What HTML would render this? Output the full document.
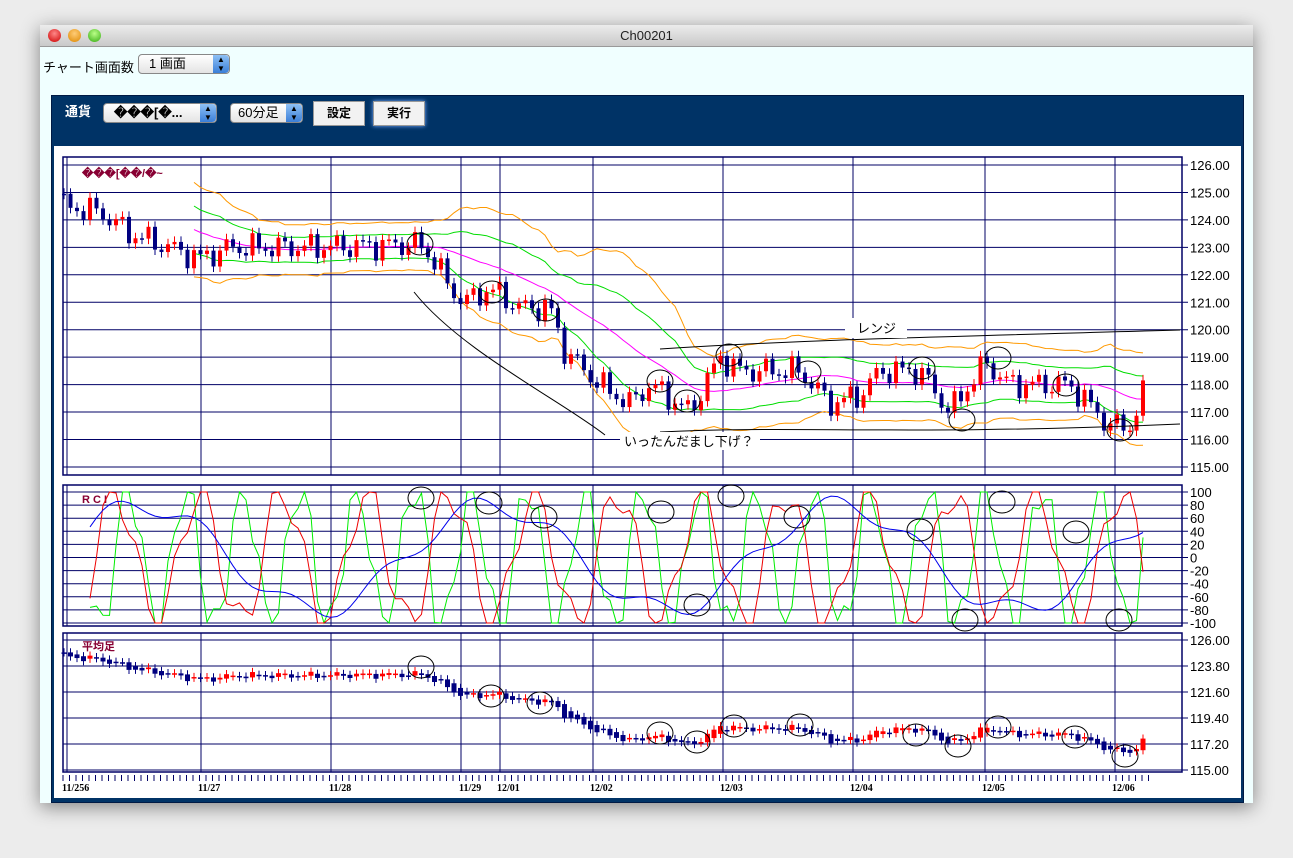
<!DOCTYPE html>
<html><head><meta charset="utf-8"><style>
body{margin:0;width:1293px;height:858px;background:#ececec;position:relative;overflow:hidden;font-family:"Liberation Sans","Noto Sans CJK JP",sans-serif}
.win{position:absolute;left:40px;top:25px;width:1213px;height:778px;background:#f0ffff;box-shadow:0 4px 18px rgba(0,0,0,.45)}
.tb{height:21px;background:linear-gradient(#ececec,#c9c9c9);border-bottom:1px solid #999;text-align:center;font-size:13px;line-height:21px;color:#222}
.dot{position:absolute;top:4px;width:13px;height:13px;border-radius:50%}
.sel{position:absolute;background:linear-gradient(#fff,#e4e4e4);border:1px solid #888;border-radius:4px;font-size:13px;line-height:18px;height:18px}
.sel .ar{position:absolute;right:0;top:0;width:16px;height:18px;background:linear-gradient(#8ec0f5,#3b7fd8);border-radius:0 4px 4px 0;color:#000;font-size:8px;line-height:9px;text-align:center}
.btn{position:absolute;background:#f2f2f2;border:1px solid #999;font-size:12px;font-weight:bold;text-align:center;line-height:23px;height:23px}
</style></head><body>
<div class="win">
<div class="tb">Ch00201</div>
<div class="dot" style="left:8px;background:radial-gradient(circle at 50% 35%,#f88,#c00)"></div>
<div class="dot" style="left:28px;background:radial-gradient(circle at 50% 35%,#fc7,#d80)"></div>
<div class="dot" style="left:48px;background:radial-gradient(circle at 50% 35%,#bf8,#3a1)"></div>
<div style="position:absolute;left:3px;top:32px;font-size:13px">チャート画面数</div>
<div class="sel" style="left:98px;top:29px;width:90px"><span style="padding-left:10px">1 画面</span><div class="ar">▲<br>▼</div></div>
<div style="position:absolute;left:11px;top:70px;width:1191px;height:706px;background:#003366;border:1px solid #001a44"></div>
<div style="position:absolute;left:25px;top:76px;color:#fff;font-weight:bold;font-size:13px">通貨</div>
<div class="sel" style="left:63px;top:78px;width:112px"><span style="padding-left:10px;font-weight:bold">���[�...</span><div class="ar">▲<br>▼</div></div>
<div class="sel" style="left:190px;top:78px;width:71px"><span style="padding-left:7px">60分足</span><div class="ar">▲<br>▼</div></div>
<div class="btn" style="left:273px;top:76px;width:50px">設定</div>
<div class="btn" style="left:333px;top:76px;width:50px;box-shadow:0 0 4px #7af">実行</div>
<div style="position:absolute;left:14px;top:121px;width:1187px;height:652px;background:#fff"></div>
</div>
<svg id="c" style="position:absolute;left:0;top:0" width="1293" height="858" font-family="Liberation Sans,Noto Sans CJK JP,sans-serif"></svg>
<script>
var s='',N='#000066';
function L(x1,y1,x2,y2,c,w){s+='<line x1="'+x1+'" y1="'+y1+'" x2="'+x2+'" y2="'+y2+'" stroke="'+(c||N)+'" stroke-width="'+(w||1)+'"/>'}
function T(x,y,t,o){s+='<text x="'+x+'" y="'+y+'" '+(o||'')+'>'+t+'</text>'}
var vx=[63,67,201,331,461,500,593,723,853,985,1115];
var panels=[[157,475],[485,626],[633,772]];
panels.forEach(function(p){s+='<rect x="63" y="'+p[0]+'" width="1119" height="'+(p[1]-p[0])+'" fill="none" stroke="'+N+'" stroke-width="1.5"/>';vx.forEach(function(x){if(x!=500||p[0]>600)L(x,p[0],x,p[1])})});
L(500,157,500,475);L(500,485,500,626);
for(var i=0;i<12;i++){var y=165+i*27.45;L(63,y,1188,y);T(1190,y+5,(126-i).toFixed(2),'font-size="13"')}
var rl=[100,80,60,40,20,0,-20,-40,-60,-80,-100];
rl.forEach(function(v){var y=557.5-v*0.655;L(63,y,1188,y);T(1190,y+5,v,'font-size="13"')});
var bl=[126,123.8,121.6,119.4,117.2,115];
bl.forEach(function(v,i){var y=640+i*26;L(63,y,1188,y);T(1190,y+5,v.toFixed(2),'font-size="13"')});
T(82,177,'���[��/�~','font-size="11" font-weight="bold" fill="#880033"');
T(82,503,'R C I','font-size="11" font-weight="bold" fill="#880033"');
T(82,650,'平均足','font-size="11" font-weight="bold" fill="#880033"');
for(var x=63;x<1150;x+=6.5)L(x,775,x,781);
[['11/256',62],['11/27',198],['11/28',329],['11/29',459],['12/01',497],['12/02',590],['12/03',720],['12/04',850],['12/05',982],['12/06',1112]].forEach(function(d){T(d[1],791,d[0],'font-size="10" font-weight="bold" font-family="Liberation Serif,serif"')});
var K=[[63,124.5],[100,124.3],[130,123.5],[200,122.6],[230,123],[300,123],[420,123.1],[435,122.5],[450,121.5],[465,121],[490,121.5],[520,120.8],[550,120.8],[565,119.2],[600,118],[630,117.3],[650,118],[690,117],[720,119],[740,118.5],[800,118.5],[830,117.3],[860,117.6],[880,118.5],[920,118.5],[950,117],[985,118.8],[1010,118],[1070,118],[1110,116.5],[1130,116.5],[1150,118.2]];
function P(x){for(var i=0;i<K.length-1;i++)if(x<=K[i+1][0]){var a=K[i],b=K[i+1];return a[1]+(b[1]-a[1])*(x-a[0])/(b[0]-a[0])}return K[K.length-1][1]}
var xs=[],cl=[];for(var x=64;x<=1148;x+=6.5){xs.push(x);cl.push(P(x)+0.35*Math.sin(x*1.7)+0.2*Math.sin(x*0.43))}
var py=function(p){return 165+(126-p)*27.45};
var ma=[],up=[],dn=[],u2=[],d2=[];
for(var i=0;i<xs.length;i++){var st=Math.max(0,i-20),sm=0,n=0;for(var j=st;j<=i;j++){sm+=cl[j];n++}var m=sm/n,v=0;for(var j=st;j<=i;j++)v+=(cl[j]-m)*(cl[j]-m);var sd=Math.sqrt(v/n)+0.15;ma.push(m);up.push(m+sd);dn.push(m-sd);u2.push(m+2*sd);d2.push(m-2*sd)}
function PL(arr,c,f,from){var d='';for(var i=from;i<arr.length;i++)d+=(i==from?'M':'L')+xs[i].toFixed(1)+' '+f(arr[i]).toFixed(1);s+='<path d="'+d+'" fill="none" stroke="'+c+'" stroke-width="1"/>'}
PL(u2,'#ff9900',py,20);PL(d2,'#ff9900',py,20);PL(up,'#00dd00',py,20);PL(dn,'#00dd00',py,20);PL(ma,'#ff00ff',py,20);
for(var i=0;i<xs.length;i++){var o=i?cl[i-1]:cl[0],c=cl[i],hi=Math.max(o,c)+0.2,lo=Math.min(o,c)-0.2,x=xs[i];var col=c>o?'#ff0000':'#000080';L(x,py(hi),x,py(lo),col);s+='<rect x="'+(x-2)+'" y="'+py(Math.max(o,c))+'" width="4" height="'+Math.max(1.5,Math.abs(py(o)-py(c)))+'" fill="'+col+'"/>'}
var by=function(p){return 640+(126-p)*11.82};var ho=cl[0],hc=cl[0];
for(var i=0;i<xs.length;i++){var nho=(ho+hc)/2,nhc=cl[i];ho=nho;hc=(nhc*2+ho)/3;var x=xs[i],col=hc>ho?'#ff0000':'#000080';L(x,by(Math.max(ho,hc)+0.35),x,by(Math.min(ho,hc)-0.35),col);s+='<rect x="'+(x-2.5)+'" y="'+by(Math.max(ho,hc))+'" width="5" height="'+Math.max(1.5,Math.abs(by(ho)-by(hc)))+'" fill="'+col+'"/>'}
var ry=function(v){return 557.5-Math.max(-100,Math.min(100,v))*0.655};
function R(f,c){var d='';for(var x=90;x<=1148;x+=6.5)d+=(x==90?'M':'L')+x+' '+ry(f(x)).toFixed(1);s+='<path d="'+d+'" fill="none" stroke="'+c+'"/>'}
R(function(x){return 110*Math.sin(x*0.11)+35*Math.sin(x*0.27)},'#00ee00');
R(function(x){return 100*Math.sin(x*0.075-0.8)+30*Math.sin(x*0.19)},'#ee0000');
R(function(x){return 80*Math.sin(x*0.018-1)+15*Math.sin(x*0.07)},'#0000ee');
s+='<path d="M660 349 C800 340 900 338 1180 330" fill="none" stroke="#000"/><path d="M660 432 C800 425 900 436 1180 424" fill="none" stroke="#000"/><path d="M414 292 C460 350 560 400 605 435" fill="none" stroke="#000"/>';
s+='<rect x="845" y="318" width="62" height="20" fill="#fff"/>';T(857,333,'レンジ','font-size="13"');
s+='<rect x="620" y="432" width="140" height="18" fill="#fff"/>';T(624,446,'いったんだまし下げ？','font-size="13"');
[[420,244],[492,292],[546,310],[660,381],[687,401],[729,355],[808,372],[922,368],[962,420],[998,358],[1066,385],[1120,430],[421,498],[489,503],[544,517],[661,512],[731,496],[797,517],[920,530],[965,620],[1002,502],[1076,532],[1119,620],[697,605],[421,667],[491,696],[540,703],[660,733],[697,742],[734,726],[800,725],[916,735],[958,746],[998,727],[1075,737],[1125,756]].forEach(function(e){s+='<ellipse cx="'+e[0]+'" cy="'+e[1]+'" rx="13" ry="11" fill="none" stroke="#000"/>'});
document.getElementById('c').innerHTML=s;
</script>
</body></html>
